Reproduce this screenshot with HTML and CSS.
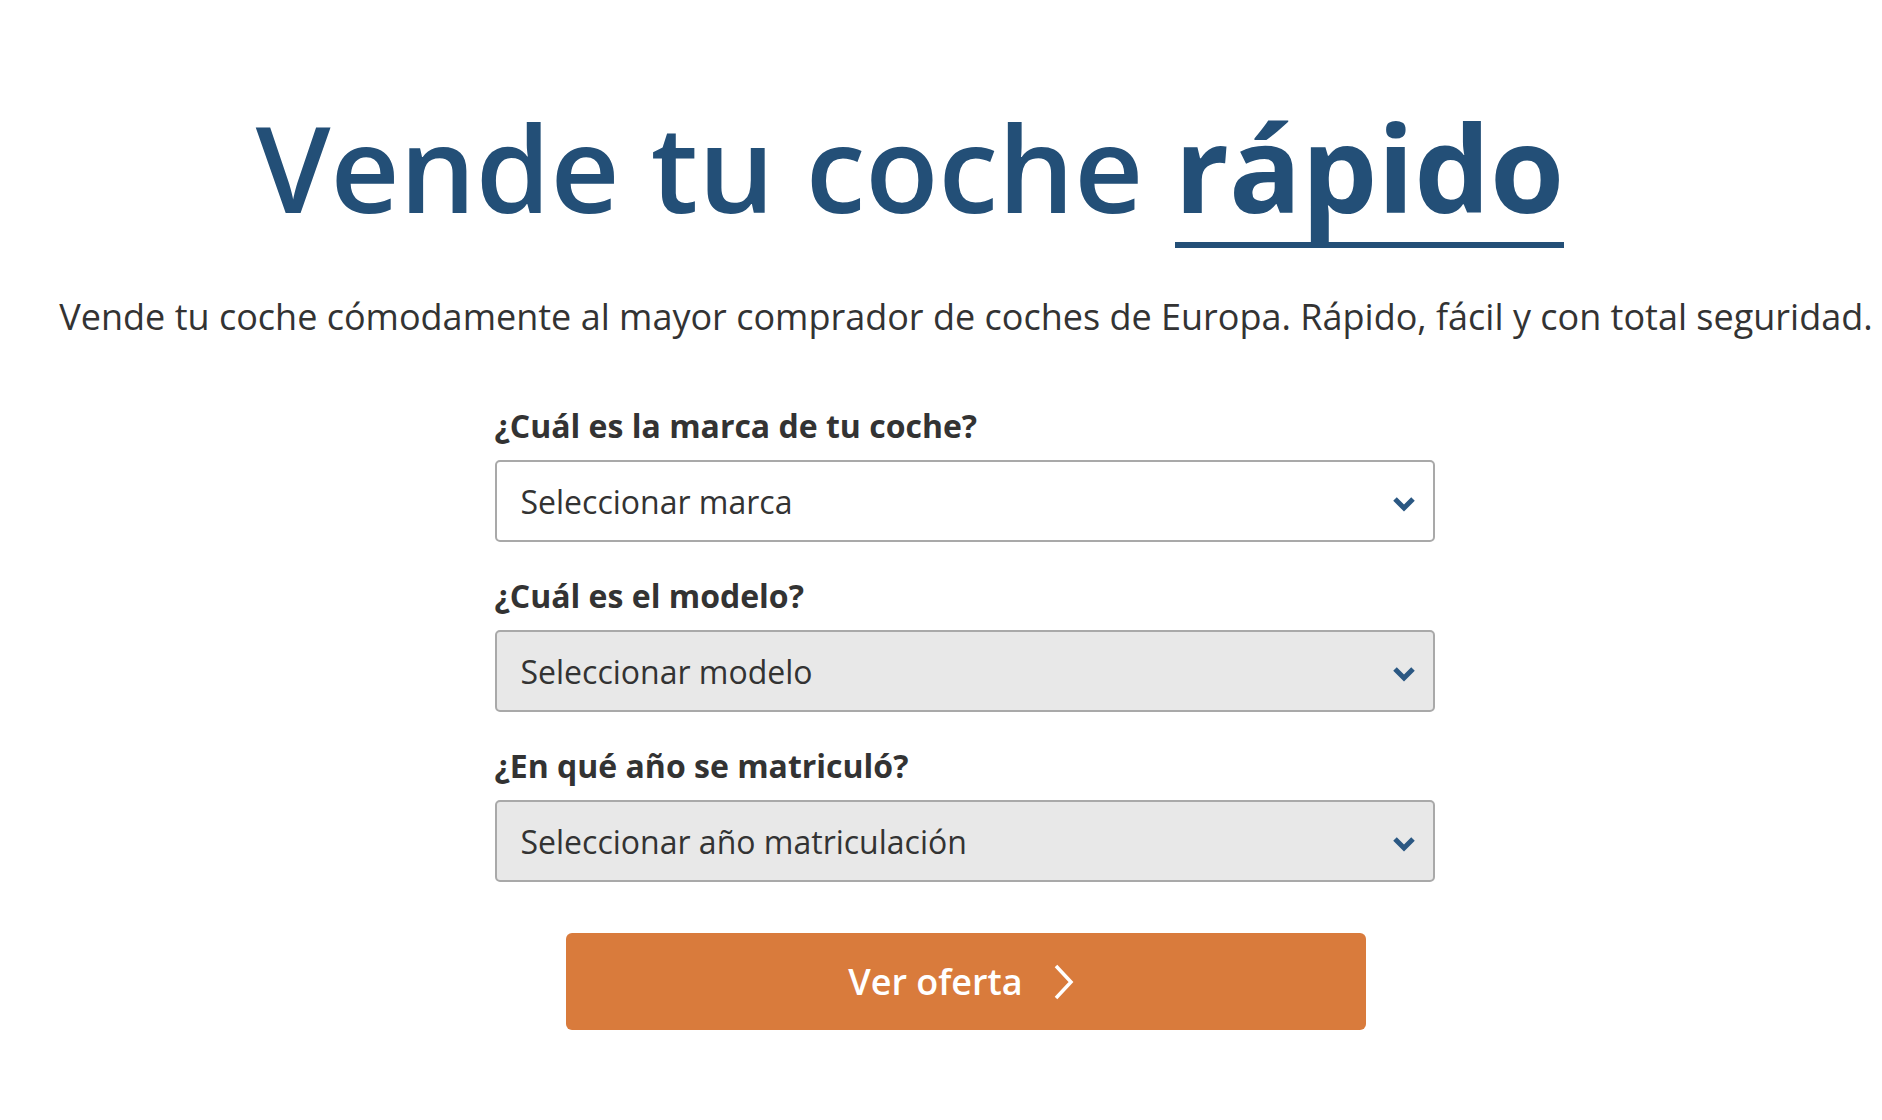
FILE: index.html
```html
<!DOCTYPE html>
<html lang="es">
<head>
<meta charset="utf-8">
<title>Vende tu coche rápido</title>
<link rel="stylesheet" href="styles.css">
</head>
<body>
<main class="page">
  <h1 class="title">Vende tu coche <span class="title-em">rápido</span></h1>
  <p class="lead">Vende tu coche cómodamente al mayor comprador de coches de Europa. Rápido, fácil y con total seguridad.</p>
  <form class="form">
    <div class="field">
      <label class="label">¿Cuál es la marca de tu coche?</label>
      <div class="select">
        <span class="select-text">Seleccionar marca</span>
        <svg class="chev" width="24" height="16" viewBox="0 0 24 16"><polyline points="3,3 12,12 21,3" fill="none" stroke="#2b5883" stroke-width="5"/></svg>
      </div>
    </div>
    <div class="field">
      <label class="label">¿Cuál es el modelo?</label>
      <div class="select select-disabled">
        <span class="select-text">Seleccionar modelo</span>
        <svg class="chev" width="24" height="16" viewBox="0 0 24 16"><polyline points="3,3 12,12 21,3" fill="none" stroke="#2b5883" stroke-width="5"/></svg>
      </div>
    </div>
    <div class="field">
      <label class="label">¿En qué año se matriculó?</label>
      <div class="select select-disabled">
        <span class="select-text">Seleccionar año matriculación</span>
        <svg class="chev" width="24" height="16" viewBox="0 0 24 16"><polyline points="3,3 12,12 21,3" fill="none" stroke="#2b5883" stroke-width="5"/></svg>
      </div>
    </div>
    <button type="button" class="btn">
      <span>Ver oferta</span>
      <svg class="btn-chev" width="26" height="38" viewBox="0 0 26 38"><polyline points="5,3 20,19 5,35" fill="none" stroke="#ffffff" stroke-width="3.5"/></svg>
    </button>
  </form>
</main>
</body>
</html>
```

FILE: styles.css
```css
html, body {
  margin: 0;
  padding: 0;
  background: #ffffff;
}

body {
  font-family: "Open Sans", "Noto Sans", sans-serif;
  color: #333333;
}

.page {
  padding-left: 50px;
  display: flex;
  flex-direction: column;
  align-items: center;
}

.title {
  align-self: stretch;
  margin: 92px 0 0 0;
  padding-right: 112px;
  text-align: center;
  font-size: 120px;
  line-height: 150px;
  font-weight: 600;
  color: #234f77;
  letter-spacing: 0;
}

.title-em {
  display: inline-block;
  font-weight: 700;
  line-height: 150px;
  border-bottom: 6px solid #234f77;
}

.lead {
  margin: 45px 0 0 0;
  font-size: 36px;
  line-height: 48px;
  white-space: nowrap;
  color: #333333;
}

.form {
  width: 940px;
  margin-top: 63px;
  margin-right: 3px;
  display: flex;
  flex-direction: column;
}

.field {
  display: flex;
  flex-direction: column;
  margin-bottom: 32px;
}

.label {
  font-size: 32px;
  line-height: 44px;
  font-weight: 700;
  color: #333333;
  margin-bottom: 12px;
}

.select {
  box-sizing: border-box;
  height: 82px;
  border: 2px solid #a9a9a9;
  border-radius: 5px;
  background: #ffffff;
  display: flex;
  align-items: center;
  justify-content: space-between;
  padding: 0 17px 0 24px;
}

.select-disabled {
  background: #e8e8e8;
}

.select-text {
  font-size: 32px;
  color: #333333;
}

.chev {
  display: block;
  margin-top: 6px;
}

.btn {
  align-self: center;
  width: 800px;
  height: 97px;
  margin-top: 19px;
  margin-left: 2px;
  border: none;
  border-radius: 6px;
  background: #d97b3c;
  color: #ffffff;
  font-family: "Open Sans", "Noto Sans", sans-serif;
  font-size: 36px;
  font-weight: 600;
  display: flex;
  align-items: center;
  justify-content: center;
  gap: 28px;
  padding: 0 6px 0 0;
}

.btn-chev {
  display: block;
}
```
